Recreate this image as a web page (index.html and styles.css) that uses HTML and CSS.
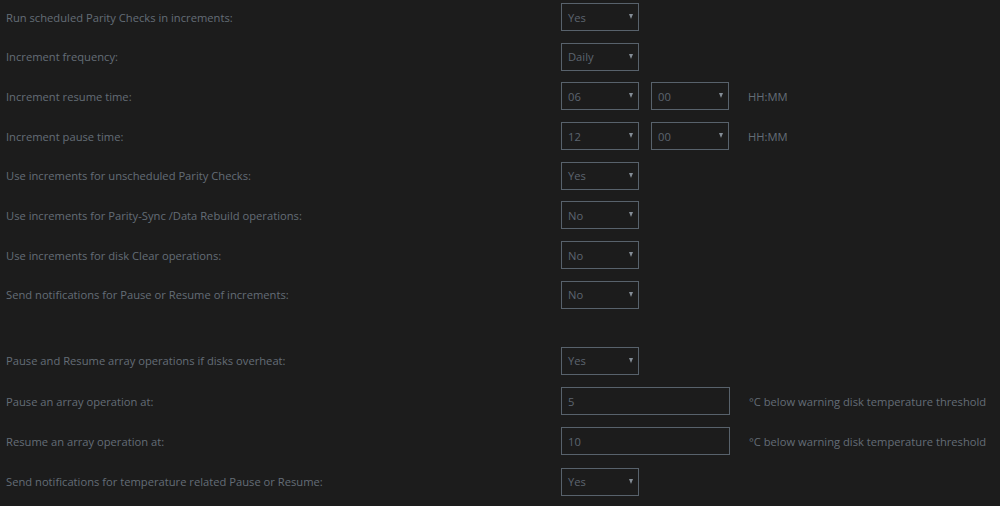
FILE: index.html
```html
<!DOCTYPE html>
<html lang="en">
<head>
<meta charset="utf-8">
<title>Parity Check Tuning</title>
<link rel="stylesheet" href="styles.css">
</head>
<body>
<form class="settings">
  <div class="group">
    <div class="row">
      <label class="label">Run scheduled Parity Checks in increments:</label>
      <div class="field"><span class="select">Yes<i class="caret"></i></span></div>
    </div>
    <div class="row">
      <label class="label">Increment frequency:</label>
      <div class="field"><span class="select">Daily<i class="caret"></i></span></div>
    </div>
    <div class="row">
      <label class="label">Increment resume time:</label>
      <div class="field">
        <span class="select">06<i class="caret"></i></span>
        <span class="select">00<i class="caret"></i></span>
        <span class="hint">HH:MM</span>
      </div>
    </div>
    <div class="row">
      <label class="label">Increment pause time:</label>
      <div class="field">
        <span class="select">12<i class="caret"></i></span>
        <span class="select">00<i class="caret"></i></span>
        <span class="hint">HH:MM</span>
      </div>
    </div>
    <div class="row">
      <label class="label">Use increments for unscheduled Parity Checks:</label>
      <div class="field"><span class="select">Yes<i class="caret"></i></span></div>
    </div>
    <div class="row">
      <label class="label">Use increments for Parity-Sync /Data Rebuild operations:</label>
      <div class="field"><span class="select">No<i class="caret"></i></span></div>
    </div>
    <div class="row">
      <label class="label">Use increments for disk Clear operations:</label>
      <div class="field"><span class="select">No<i class="caret"></i></span></div>
    </div>
    <div class="row">
      <label class="label">Send notifications for Pause or Resume of increments:</label>
      <div class="field"><span class="select">No<i class="caret"></i></span></div>
    </div>
  </div>

  <div class="group group-temp">
    <div class="row">
      <label class="label">Pause and Resume array operations if disks overheat:</label>
      <div class="field"><span class="select">Yes<i class="caret"></i></span></div>
    </div>
    <div class="row">
      <label class="label">Pause an array operation at:</label>
      <div class="field">
        <span class="input">5</span>
        <span class="hint">°C below warning disk temperature threshold</span>
      </div>
    </div>
    <div class="row">
      <label class="label">Resume an array operation at:</label>
      <div class="field">
        <span class="input">10</span>
        <span class="hint">°C below warning disk temperature threshold</span>
      </div>
    </div>
    <div class="row">
      <label class="label">Send notifications for temperature related Pause or Resume:</label>
      <div class="field"><span class="select">Yes<i class="caret"></i></span></div>
    </div>
  </div>
</form>
</body>
</html>
```

FILE: styles.css
```css
html, body {
  margin: 0;
  padding: 0;
  background: #1c1c1c;
}

body {
  font-family: "Open Sans", "DejaVu Sans", sans-serif;
  font-size: 11.2px;
  color: #646d77;
}

.settings {
  display: flex;
  flex-direction: column;
  gap: 38px;
  padding-top: 3px;
}

.group {
  display: flex;
  flex-direction: column;
  gap: 11.7px;
}

.group-temp {
  gap: 12.3px;
}

.row {
  display: flex;
  align-items: center;
  height: 28px;
}

.label {
  width: 555px;
  padding-left: 6px;
  white-space: nowrap;
}

.field {
  display: flex;
  align-items: center;
  gap: 12px;
}

.select,
.input {
  box-sizing: border-box;
  height: 28px;
  border: 1px solid #58626c;
  display: flex;
  align-items: center;
  padding-left: 6px;
  color: #5c6570;
  position: relative;
}

.select {
  width: 78px;
}

.input {
  width: 169px;
}

.caret {
  position: absolute;
  right: 5px;
  top: 10px;
  width: 0;
  height: 0;
  border-left: 2.5px solid transparent;
  border-right: 2.5px solid transparent;
  border-top: 5px solid #848d96;
}

.hint {
  margin-left: 7px;
  white-space: nowrap;
}
```
